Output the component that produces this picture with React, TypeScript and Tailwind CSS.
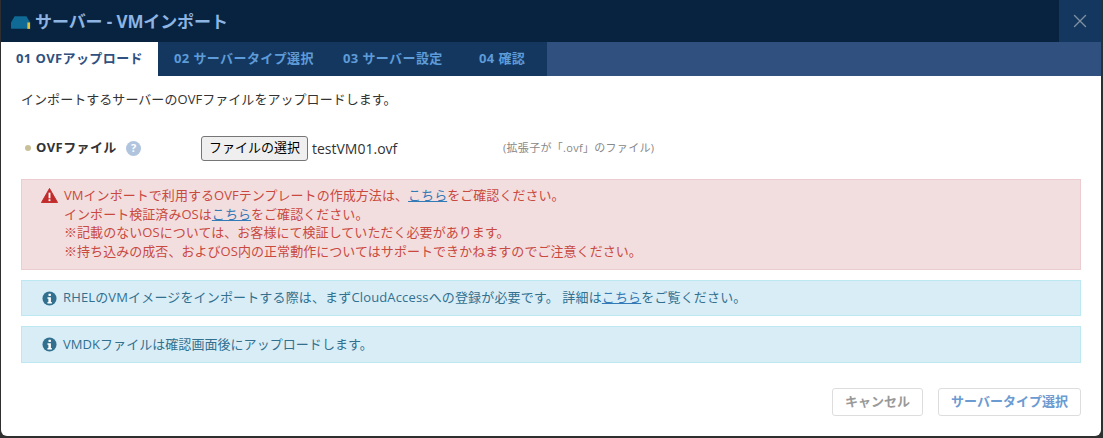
import { X } from "lucide-react";

const font = { fontFamily: '"Open Sans", "Noto Sans CJK JP", "Liberation Sans", sans-serif' };

function InfoIcon() {
  return (
    <svg viewBox="0 0 16 16" className="w-[15px] h-[15px] shrink-0">
      <circle cx="8" cy="8" r="7.5" fill="#31708f" />
      <rect x="6.9" y="2.8" width="2.6" height="2.4" rx="0.4" fill="#fff" />
      <path d="M5.8 6.6h3.7v5h1v1.6H5.8v-1.6h1v-3.4h-1z" fill="#fff" />
    </svg>
  );
}

function Link() {
  return <span className="text-[#337ab7] underline">こちら</span>;
}

export default function App() {
  return (
    <div className="w-[1103px] h-[438px] bg-[#2f2f2f] overflow-hidden font-sans" style={font}>
      <div className="ml-px w-[1100px] h-[436px] bg-white rounded-b-md overflow-hidden flex flex-col">
        <div className="h-[42px] bg-[#08233f] flex items-center justify-between">
          <div className="flex items-center pl-[10px] gap-[4px]">
            <svg viewBox="0 0 22 16" className="w-[20px] h-[15px] mt-[3px]">
              <path d="M0 14V8L4 1h13l4 7v7H1a1 1 0 0 1-1-1z" fill="#0f6a96" />
              <rect x="18" y="8" width="3" height="7" fill="#e3c23c" />
            </svg>
            <span className="text-[17px] font-bold text-[#8db4e2] leading-none tracking-[-0.1px]">サーバー - VMインポート</span>
          </div>
          <div className="w-[42px] h-[42px] bg-[#14375f] flex items-center justify-center text-[#7f8f9f]">
            <X size={22} strokeWidth={1.5} />
          </div>
        </div>

        <div className="h-[34px] bg-[#30517f] flex text-[13px] font-bold tracking-[0.4px]">
          <div className="w-[157px] bg-white flex items-center pl-[15px] text-[#30517f]">01 OVFアップロード</div>
          <div className="w-[389px] bg-[#14375f] flex items-center text-[#5d9bd9]">
            <span className="pl-[16px] w-[185px]">02 サーバータイプ選択</span>
            <span className="w-[136px]">03 サーバー設定</span>
            <span>04 確認</span>
          </div>
        </div>

        <div className="flex-1 flex flex-col px-[20px]">
          <p className="mt-[14px] text-[13px] leading-[18px] text-[#333] tracking-[0.05px]">インポートするサーバーのOVFファイルをアップロードします。</p>

          <div className="mt-[27px] h-[26px] flex items-center text-[13px]">
            <span className="w-[6px] h-[6px] rounded-full bg-[#c9c09a] ml-[4px] mr-[5px]" />
            <span className="w-[90px] font-bold text-[#333] tracking-[0.4px]">OVFファイル</span>
            <span className="w-[15px] h-[15px] rounded-full bg-[#b0c4de] text-white text-[11px] font-bold flex items-center justify-center">?</span>
            <span className="ml-[60px] h-[25px] w-[107px] border border-[#767676] rounded-[3px] bg-[#efefef] flex items-center justify-center text-[13px] text-black">ファイルの選択</span>
            <span className="ml-[4px] w-[191px] text-[14px] mt-[1px] text-[#333]">testVM01.ovf</span>
            <span className="text-[11px] text-[#888] tracking-[0.3px] mt-[1px]">(拡張子が「.ovf」のファイル)</span>
          </div>

          <div className="mt-[18px] h-[91px] bg-[#f2dede] border border-[#ebccd1] pl-[19px] pt-[6px] flex gap-[6px] text-[13px] leading-[18.5px] text-[#c9493f] tracking-[0.05px]">
            <svg viewBox="0 0 18 16" className="w-[17px] h-[15px] mt-[2px] shrink-0">
              <path d="M9 0.5L17.6 15.5H0.4z" fill="#c12b2b" stroke="#c12b2b" strokeLinejoin="round" />
              <rect x="8" y="5" width="2" height="6" fill="#fff" />
              <rect x="8" y="12" width="2" height="2" fill="#fff" />
            </svg>
            <div>
              <div>VMインポートで利用するOVFテンプレートの作成方法は、<Link />をご確認ください。</div>
              <div>インポート検証済みOSは<Link />をご確認ください。</div>
              <div>※記載のないOSについては、お客様にて検証していただく必要があります。</div>
              <div>※持ち込みの成否、およびOS内の正常動作についてはサポートできかねますのでご注意ください。</div>
            </div>
          </div>

          <div className="mt-[10px] h-[36px] bg-[#d9edf7] border border-[#bce8f1] pl-[20px] flex items-center gap-[6px] text-[13px] text-[#31708f] tracking-[0.15px]">
            <InfoIcon />
            <span>RHELのVMイメージをインポートする際は、まずCloudAccessへの登録が必要です。 詳細は<Link />をご覧ください。</span>
          </div>

          <div className="mt-[10px] h-[37px] bg-[#d9edf7] border border-[#bce8f1] pl-[20px] flex items-center gap-[6px] text-[13px] text-[#31708f] tracking-[0.05px]">
            <InfoIcon />
            <span>VMDKファイルは確認画面後にアップロードします。</span>
          </div>

          <div className="mt-[25px] flex justify-end gap-[15px] text-[13px] font-bold">
            <div className="h-[28px] w-[91px] border border-[#ddd] rounded-[3px] flex items-center justify-center text-[#999]">キャンセル</div>
            <div className="h-[28px] w-[143px] border border-[#ddd] rounded-[3px] flex items-center justify-center text-[#6b9bd1]">サーバータイプ選択</div>
          </div>
        </div>
      </div>
    </div>
  );
}
